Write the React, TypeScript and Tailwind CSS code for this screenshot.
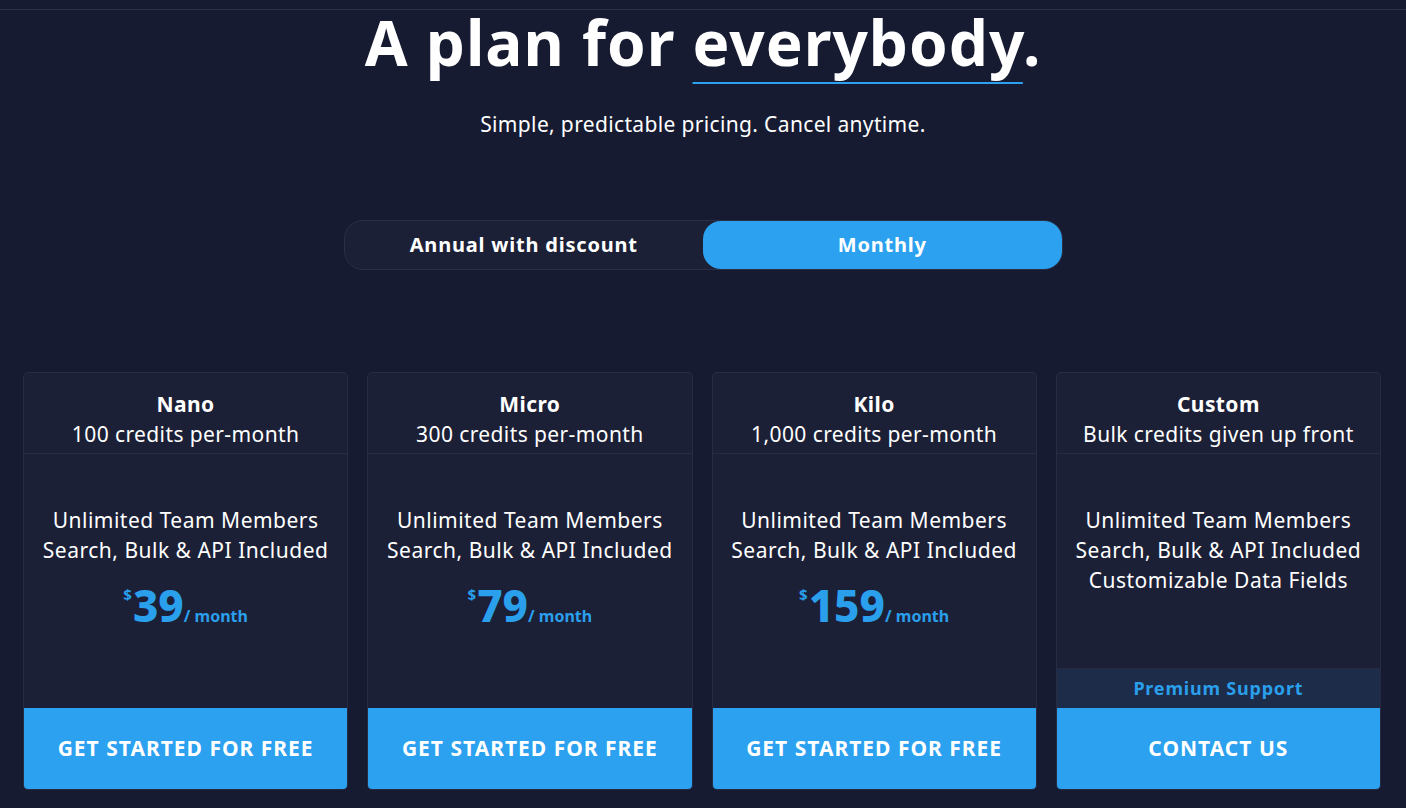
import React, { useState } from 'react'

type Plan = {
  name: string
  credits: string
  features: string[]
  price?: string
  cta: string
  extra?: string
}

const plans: Plan[] = [
  {
    name: 'Nano',
    credits: '100 credits per-month',
    features: ['Unlimited Team Members', 'Search, Bulk & API Included'],
    price: '39',
    cta: 'GET STARTED FOR FREE',
  },
  {
    name: 'Micro',
    credits: '300 credits per-month',
    features: ['Unlimited Team Members', 'Search, Bulk & API Included'],
    price: '79',
    cta: 'GET STARTED FOR FREE',
  },
  {
    name: 'Kilo',
    credits: '1,000 credits per-month',
    features: ['Unlimited Team Members', 'Search, Bulk & API Included'],
    price: '159',
    cta: 'GET STARTED FOR FREE',
  },
  {
    name: 'Custom',
    credits: 'Bulk credits given up front',
    features: ['Unlimited Team Members', 'Search, Bulk & API Included', 'Customizable Data Fields'],
    cta: 'CONTACT US',
    extra: 'Premium Support',
  },
]

function PlanCard({ plan }: { plan: Plan }) {
  return (
    <div className="flex flex-col rounded-[5px] border border-[#272c43] bg-[#1c2036] overflow-hidden">
      {/* header */}
      <div className="border-b border-[#272c43] pt-[16px] pb-[4px] text-center text-white tracking-[0.4px]">
        <div className="text-[21px] leading-[30px] font-bold">{plan.name}</div>
        <div className="text-[21px] leading-[30px]">{plan.credits}</div>
      </div>

      {/* features + price */}
      <div className="flex-1 pt-[51px] text-center">
        {plan.features.map((f) => (
          <div key={f} className="text-[21px] leading-[30px] tracking-[0.5px] text-white">{f}</div>
        ))}
        {plan.price && (
          <div className="mt-[17px] flex items-baseline justify-center text-[#2a9fec]">
            <span className="self-start text-[15px] font-bold leading-none mt-[5px] mr-[1px]">$</span>
            <span className="text-[44px] font-extrabold leading-[46px]">{plan.price}</span>
            <span className="text-[16px] font-bold">/ month</span>
          </div>
        )}
      </div>

      {plan.extra && (
        <div className="h-[40px] flex items-center justify-center bg-[#1d2c48] border-t border-[#272c43] text-[18px] font-bold tracking-[0.8px] text-[#2a9fec]">
          {plan.extra}
        </div>
      )}

      <button className="h-[81px] bg-[#2ba1ef] text-white text-[21px] font-bold tracking-[1px]">
        {plan.cta}
      </button>
    </div>
  )
}

export default function App() {
  const [billing, setBilling] = useState<'annual' | 'monthly'>('monthly')

  return (
    <div
      className="min-h-screen bg-[#161b31] text-white"
      style={{ fontFamily: '"Noto Sans", "Open Sans", sans-serif' }}
    >
      <div className="h-[10px] border-b border-[#2b3046]" />

      <div className="flex flex-col items-center">
        <h1 className="-mt-[4px] text-[62px] leading-[72px] font-bold tracking-[1px]">
          A plan for{' '}
          <span className="underline decoration-[#2ba1ef] decoration-2 underline-offset-[16px] [text-decoration-skip-ink:none]">everybody</span>.
        </h1>
        <p className="mt-[31px] text-[21px] leading-[30px] tracking-[0.35px] text-white">
          Simple, predictable pricing. Cancel anytime.
        </p>

        <div className="mt-[81px] flex w-[719px] h-[50px] rounded-[19px] border border-[#2a2f46] bg-[#1c2036]">
          <button
            onClick={() => setBilling('annual')}
            className={`flex-1 rounded-[18px] text-[20px] font-bold tracking-[0.8px] ${billing === 'annual' ? 'bg-[#2ba1ef]' : ''}`}
          >
            Annual with discount
          </button>
          <button
            onClick={() => setBilling('monthly')}
            className={`flex-1 rounded-[18px] text-[20px] font-bold tracking-[0.8px] ${billing === 'monthly' ? 'bg-[#2ba1ef]' : ''}`}
          >
            Monthly
          </button>
        </div>
      </div>

      <div className="mt-[102px] grid grid-cols-4 gap-[19px] pl-[23px] pr-[25px] h-[418px]">
        {plans.map((p) => (
          <PlanCard key={p.name} plan={p} />
        ))}
      </div>
    </div>
  )
}
